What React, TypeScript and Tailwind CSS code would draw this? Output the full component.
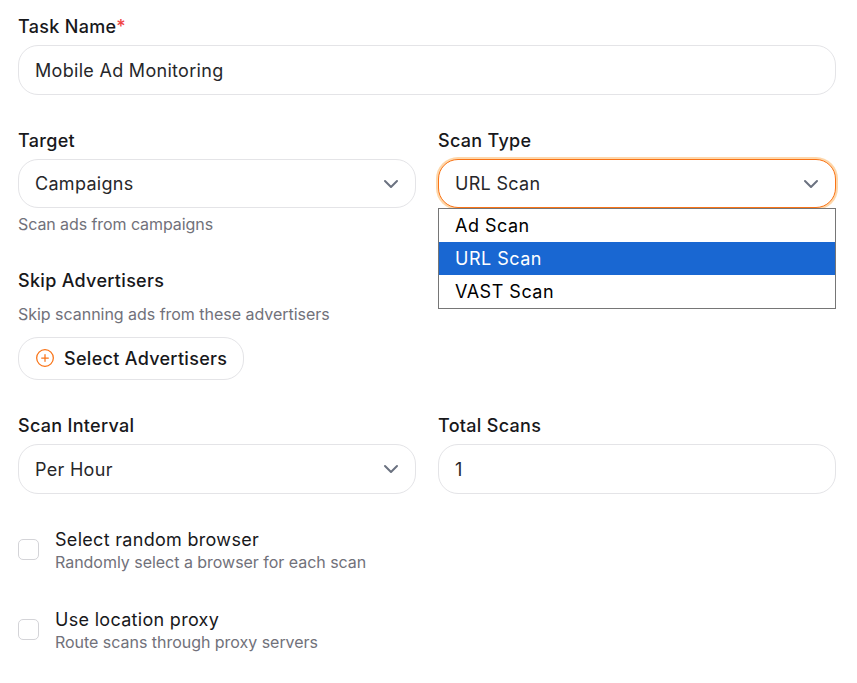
import { ChevronDown, CirclePlus } from "lucide-react";

function Label({ children }: { children: React.ReactNode }) {
  return <div className="h-[24px] leading-[24px] text-[18px] font-[450] tracking-[0.3px] text-[#18181b]">{children}</div>;
}

function Select({ value, focused, short }: { value: string; focused?: boolean; short?: boolean }) {
  return (
    <div
      className={
        "mt-[6px] flex items-center justify-between rounded-[20px] border bg-white pl-4 pr-[12px] text-[18px] tracking-[0.3px] text-[#27272a] " +
        (short ? "h-[49px] " : "h-[50px] ") +
        (focused ? "border-[#f97316] shadow-[0_0_0_2px_#fed7aa]" : "border-[#e4e4e7]")
      }
    >
      <span>{value}</span>
      <ChevronDown size={24} strokeWidth={2} className="text-[#6b7280]" />
    </div>
  );
}

function Check({ title, desc }: { title: string; desc: string }) {
  return (
    <div className="flex items-start gap-[16px]">
      <div className="mt-[11px] h-[21px] w-[21px] rounded-[5px] border border-[#d4d4d8] bg-white" />
      <div>
        <div className="h-[23px] leading-[24px] text-[18px] tracking-[0.3px] text-[#18181b]">{title}</div>
        <div className="h-[22px] leading-[22px] text-[16px] tracking-[-0.03px] text-[#71717a]">{desc}</div>
      </div>
    </div>
  );
}

export default function App() {
  return (
    <div className="min-h-[683px] bg-white pl-[18px] pr-[21px] pt-[15px] font-['Inter',sans-serif]">
      <Label>
        Task Name<span className="text-[#ef4444]">*</span>
      </Label>
      <div className="mt-[6px] flex h-[50px] items-center rounded-[20px] border border-[#e4e4e7] bg-white px-4 text-[18px] tracking-[0.3px] text-[#27272a]">
        Mobile Ad Monitoring
      </div>

      <div className="mt-[34px] grid grid-cols-2 gap-x-[22px]">
        <div>
          <Label>Target</Label>
          <Select value="Campaigns" short />
          <div className="mt-[5px] h-[22px] leading-[22px] text-[16px] tracking-[-0.08px] text-[#71717a]">Scan ads from campaigns</div>
        </div>
        <div className="relative">
          <Label>Scan Type</Label>
          <Select value="URL Scan" focused short />
          <div className="absolute left-0 right-0 top-[79px] z-10 border border-[#767676] bg-white text-[18px] leading-[33px] tracking-[0.5px] text-black">
            <div className="h-[33px] px-4">Ad Scan</div>
            <div className="h-[33px] bg-[#1967d2] px-4 text-white">URL Scan</div>
            <div className="h-[33px] px-4">VAST Scan</div>
          </div>
        </div>
      </div>

      <div className="mt-[34px]">
        <Label>Skip Advertisers</Label>
      </div>
      <div className="mt-[10px] h-[22px] leading-[22px] text-[16px] tracking-[-0.03px] text-[#71717a]">Skip scanning ads from these advertisers</div>
      <div className="mt-[12px] inline-flex h-[43px] items-center gap-[9px] rounded-[20px] border border-[#e4e4e7] bg-white pl-[16px] pr-4 text-[18px] font-[450] tracking-[0.3px] text-[#18181b]">
        <CirclePlus size={20} strokeWidth={1.5} className="-mt-[1px] text-[#f97316]" />
        Select Advertisers
      </div>

      <div className="mt-[34px] grid grid-cols-2 gap-x-[22px]">
        <div>
          <Label>Scan Interval</Label>
          <Select value="Per Hour" />
        </div>
        <div>
          <Label>Total Scans</Label>
          <div className="mt-[6px] flex h-[50px] items-center rounded-[20px] border border-[#e4e4e7] bg-white px-4 text-[18px] tracking-[0.3px] text-[#27272a]">
            1
          </div>
        </div>
      </div>

      <div className="mt-[34px] flex flex-col gap-[35px]">
        <Check title="Select random browser" desc="Randomly select a browser for each scan" />
        <Check title="Use location proxy" desc="Route scans through proxy servers" />
      </div>
    </div>
  );
}
